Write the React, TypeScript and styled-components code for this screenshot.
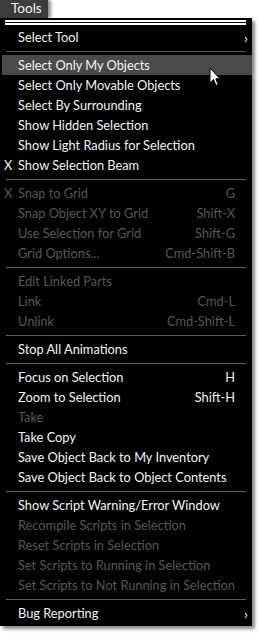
import styled, { createGlobalStyle } from "styled-components";

const Global = createGlobalStyle`
  html, body {
    margin: 0;
    background: #ffffff;
  }
  body {
    font-family: "Lato", "Liberation Sans", sans-serif;
  }
`;

type Entry =
  | { kind: "sep" }
  | {
      kind: "item";
      label: string;
      shortcut?: string;
      disabled?: boolean;
      checked?: boolean;
      submenu?: boolean;
      active?: boolean;
    };

const entries: Entry[] = [
  { kind: "item", label: "Select Tool", submenu: true },
  { kind: "sep" },
  { kind: "item", label: "Select Only My Objects", active: true },
  { kind: "item", label: "Select Only Movable Objects" },
  { kind: "item", label: "Select By Surrounding" },
  { kind: "item", label: "Show Hidden Selection" },
  { kind: "item", label: "Show Light Radius for Selection" },
  { kind: "item", label: "Show Selection Beam", checked: true },
  { kind: "sep" },
  { kind: "item", label: "Snap to Grid", shortcut: "G", checked: true, disabled: true },
  { kind: "item", label: "Snap Object XY to Grid", shortcut: "Shift-X", disabled: true },
  { kind: "item", label: "Use Selection for Grid", shortcut: "Shift-G", disabled: true },
  { kind: "item", label: "Grid Options...", shortcut: "Cmd-Shift-B", disabled: true },
  { kind: "sep" },
  { kind: "item", label: "Edit Linked Parts", disabled: true },
  { kind: "item", label: "Link", shortcut: "Cmd-L", disabled: true },
  { kind: "item", label: "Unlink", shortcut: "Cmd-Shift-L", disabled: true },
  { kind: "sep" },
  { kind: "item", label: "Stop All Animations" },
  { kind: "sep" },
  { kind: "item", label: "Focus on Selection", shortcut: "H" },
  { kind: "item", label: "Zoom to Selection", shortcut: "Shift-H" },
  { kind: "item", label: "Take", disabled: true },
  { kind: "item", label: "Take Copy" },
  { kind: "item", label: "Save Object Back to My Inventory" },
  { kind: "item", label: "Save Object Back to Object Contents" },
  { kind: "sep" },
  { kind: "item", label: "Show Script Warning/Error Window" },
  { kind: "item", label: "Recompile Scripts in Selection", disabled: true },
  { kind: "item", label: "Reset Scripts in Selection", disabled: true },
  { kind: "item", label: "Set Scripts to Running in Selection", disabled: true },
  { kind: "item", label: "Set Scripts to Not Running in Selection", disabled: true },
  { kind: "sep" },
  { kind: "item", label: "Bug Reporting", submenu: true },
];

export default function App() {
  return (
    <Page>
      <Global />
      <Tab>Tools</Tab>
      <Menu>
        <TopRule />
        {entries.map((e, i) =>
          e.kind === "sep" ? (
            <Separator key={i} />
          ) : (
            <Item key={i} $disabled={e.disabled} $active={e.active}>
              <Check>{e.checked ? "X" : ""}</Check>
              <Label>{e.label}</Label>
              <Shortcut>{e.shortcut}</Shortcut>
              <Arrow>{e.submenu ? "›" : ""}</Arrow>
            </Item>
          )
        )}
      </Menu>
      <Cursor width="12" height="20" viewBox="0 0 12 20">
        <path
          d="M1 1 L1 16 L4.5 12.5 L7 18.5 L9.2 17.5 L6.8 11.8 L11 11.8 Z"
          fill="#ffffff"
          stroke="#000000"
          strokeWidth="1"
          strokeLinejoin="round"
        />
      </Cursor>
    </Page>
  );
}

const Page = styled.div`
  position: relative;
  width: 258px;
  height: 633px;
  overflow: hidden;
  background: #ffffff;
`;

const Tab = styled.div`
  position: relative;
  z-index: 1;
  width: 37px;
  height: 18px;
  padding: 0 0 0 11px;
  background: #3c3c3c;
  color: #f2f2f2;
  font-size: 13.5px;
  line-height: 17px;
  box-shadow: 3px 0 3px rgba(0, 0, 0, 0.45);
`;

const Menu = styled.div`
  position: relative;
  z-index: 2;
  width: 252px;
  box-sizing: border-box;
  padding: 2px 0 3px;
  background: #000000;
  box-shadow: 3px 3px 3px rgba(0, 0, 0, 0.45);
`;

const TopRule = styled.div`
  margin: 0 6px 2px 5px;
  border-top: 2px solid #ffffff;
  border-bottom: 2px solid #ffffff;
  box-sizing: content-box;
  height: 1px;
`;

const Item = styled.div<{ $disabled?: boolean; $active?: boolean }>`
  display: grid;
  grid-template-columns: 18px 1fr auto 17px;
  align-items: center;
  height: 20px;
  margin-left: 2px;
  font-size: 12.8px;
  color: ${(p) => (p.$disabled ? "#585858" : "#f4f4f4")};
  background: ${(p) => (p.$active ? "#4a4a4a" : "transparent")};
  white-space: nowrap;
`;

const Check = styled.span`
  padding-left: 2px;
`;

const Label = styled.span`
  margin-left: -2px;
`;

const Shortcut = styled.span`
  text-align: right;
`;

const Arrow = styled.span`
  text-align: right;
  padding-right: 4px;
  font-size: 14px;
  color: #f4f4f4;
`;

const Separator = styled.div`
  height: 8px;
  display: flex;
  align-items: center;
  padding: 0 6px;

  &::before {
    content: "";
    flex: 1;
    height: 1px;
    background: #5a5a5a;
  }
`;

const Cursor = styled.svg`
  position: absolute;
  left: 209px;
  top: 67px;
  z-index: 3;
`;
